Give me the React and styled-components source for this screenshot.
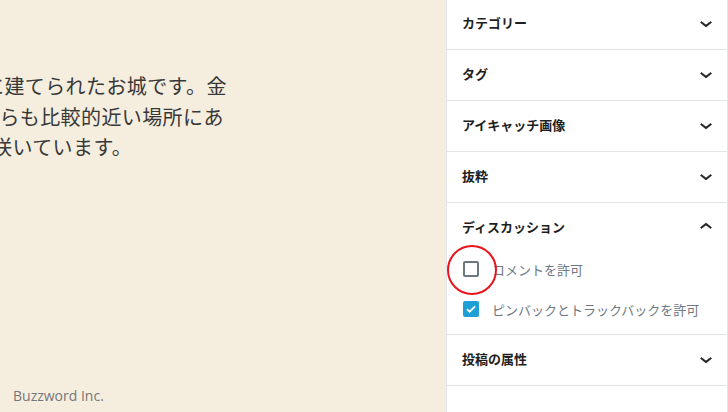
import React from "react";
import styled, { createGlobalStyle } from "styled-components";

const GlobalStyle = createGlobalStyle`
  html, body {
    margin: 0;
    padding: 0;
    background: #ffffff;
  }
  body {
    font-family: "Noto Sans CJK JP", "Noto Sans", sans-serif;
  }
`;

const Page = styled.div`
  display: flex;
  width: 728px;
  height: 412px;
  overflow: hidden;
`;

const Canvas = styled.main`
  width: 446px;
  flex: none;
  display: flex;
  flex-direction: column;
  background-color: #f5eedf;
  overflow: hidden;
`;

const Story = styled.div`
  padding-top: 71px;
  font-family: "Noto Sans CJK JP", sans-serif;
  font-size: 20px;
  line-height: 30.5px;
  letter-spacing: 0.4px;
  color: #383838;
`;

const Line = styled.div`
  white-space: nowrap;
  margin-left: ${props => props.shift}px;
`;

const Footer = styled.footer`
  margin-top: auto;
  padding: 0 0 4px 13px;
  font-family: "Open Sans", "Liberation Sans", sans-serif;
  font-size: 14px;
  line-height: 24px;
  color: #777777;
`;

const Sidebar = styled.aside`
  width: 282px;
  flex: none;
  box-sizing: border-box;
  border-left: 1px solid #e2e4e7;
  border-right: 1px solid #e2e4e7;
  position: relative;
  background: #ffffff;
  &::after {
    content: "";
    position: absolute;
    top: 0;
    bottom: 0;
    right: -3px;
    width: 2px;
    background: #2e76c4;
  }
`;

const PanelList = styled.div`
  margin-top: -1px;
  display: flex;
  flex-direction: column;
`;

const Panel = styled.section`
  border-bottom: 1px solid #e2e4e7;
`;

const PanelHeader = styled.div`
  height: 50px;
  box-sizing: border-box;
  display: flex;
  align-items: center;
  justify-content: space-between;
  padding: 0 9px 4px 15px;
  font-size: 13px;
  font-weight: 700;
  color: #1e1e1e;
`;

const Chevron = styled.svg`
  width: 24px;
  height: 24px;
  margin-top: 2px;
  fill: #1e1e1e;
  stroke: #1e1e1e;
  stroke-width: 0.6;
`;

const PanelBody = styled.div`
  padding: 4px 16px 13px;
  display: flex;
  flex-direction: column;
  gap: 16px;
`;

const CheckRow = styled.label`
  height: 24px;
  display: flex;
  align-items: center;
  gap: 13px;
  font-size: 13px;
  color: #6f7780;
`;

const BoxWrap = styled.span`
  position: relative;
  display: inline-flex;
`;

const Box = styled.span`
  width: 16px;
  height: 16px;
  box-sizing: border-box;
  border-radius: 2px;
  display: inline-flex;
  align-items: center;
  justify-content: center;
  border: 2px solid ${props => (props.checked ? "#1e9fd6" : "#6c7781")};
  background: ${props => (props.checked ? "#1e9fd6" : "#ffffff")};
`;

const Highlight = styled.span`
  position: absolute;
  left: 50%;
  top: 50%;
  width: 46px;
  height: 46px;
  margin: -24px 0 0 -24px;
  border: 2px solid #e8141c;
  border-radius: 50%;
  pointer-events: none;
`;

const ChevronDown = () => (
  <Chevron viewBox="0 0 24 24">
    <path d="M17.5 11.6L12 16l-5.5-4.4.9-1.2L12 14l4.6-3.6 1 1.2z" />
  </Chevron>
);

const ChevronUp = () => (
  <Chevron viewBox="0 0 24 24">
    <path d="M6.5 12.4L12 8l5.5 4.4-.9 1.2L12 10l-4.6 3.6-1-1.2z" />
  </Chevron>
);

const CheckMark = () => (
  <svg width="12" height="12" viewBox="0 0 12 12">
    <path d="M2 6.2l2.6 2.5L10 3.4" fill="none" stroke="#ffffff" strokeWidth="1.8" />
  </svg>
);

const Checkbox = ({ checked, label, marked }) => (
  <CheckRow>
    <BoxWrap>
      <Box checked={checked}>{checked && <CheckMark />}</Box>
      {marked && <Highlight />}
    </BoxWrap>
    {label}
  </CheckRow>
);

const panels = ["カテゴリー", "タグ", "アイキャッチ画像", "抜粋"];

export default function App() {
  return (
    <Page>
      <GlobalStyle />
      <Canvas>
        <Story>
          <Line shift={-16}>に建てられたお城です。金</Line>
          <Line shift={-21}>からも比較的近い場所にあ</Line>
          <Line shift={-8}>咲いています。</Line>
        </Story>
        <Footer>Buzzword Inc.</Footer>
      </Canvas>
      <Sidebar>
        <PanelList>
          {panels.map(title => (
            <Panel key={title}>
              <PanelHeader>
                {title}
                <ChevronDown />
              </PanelHeader>
            </Panel>
          ))}
          <Panel>
            <PanelHeader>
              ディスカッション
              <ChevronUp />
            </PanelHeader>
            <PanelBody>
              <Checkbox label="コメントを許可" marked />
              <Checkbox label="ピンバックとトラックバックを許可" checked />
            </PanelBody>
          </Panel>
          <Panel>
            <PanelHeader>
              投稿の属性
              <ChevronDown />
            </PanelHeader>
          </Panel>
        </PanelList>
      </Sidebar>
    </Page>
  );
}
